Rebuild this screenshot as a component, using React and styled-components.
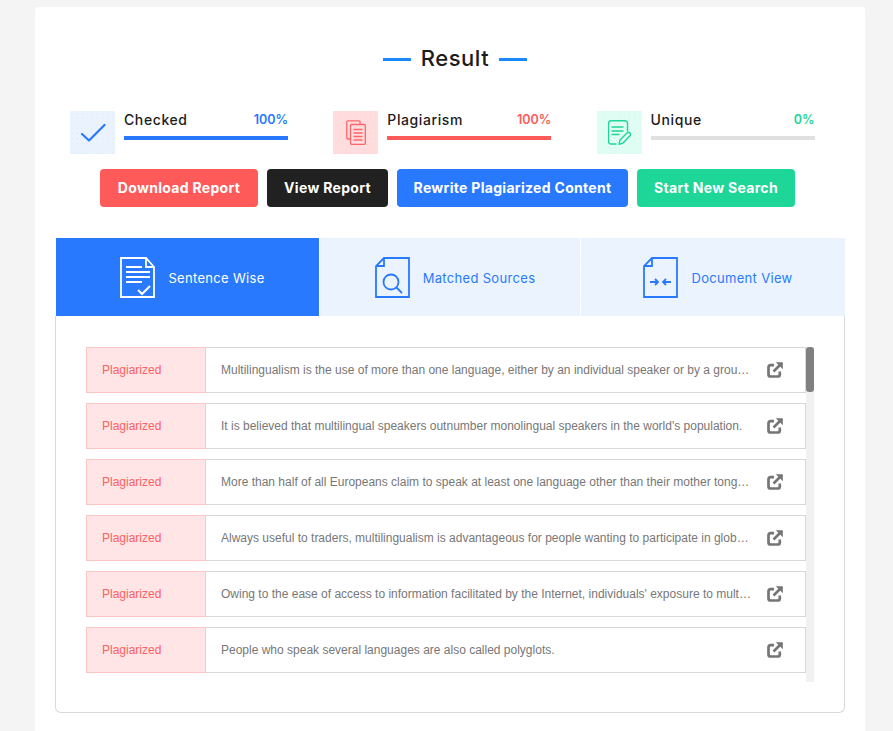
import React from "react";
import styled, { createGlobalStyle, css } from "styled-components";

const dots = (c) => css`
  background-image: radial-gradient(${c} 0.6px, transparent 0.8px);
  background-size: 5px 5px;
`;

const Global = createGlobalStyle`
  html, body { margin: 0; padding: 0; height: 100%; overflow: hidden; }
  body { background: #f4f4f4; font-family: "Inter", "Liberation Sans", sans-serif; }
  * { box-sizing: border-box; }
`;

const Card = styled.main`
  width: 830px;
  height: 724px;
  margin: 7px 0 0 35px;
  background: #fff;
  border-radius: 3px 3px 0 0;
  padding: 32px 20px 0 20px;
  display: flex;
  flex-direction: column;
`;

const Title = styled.h1`
  margin: 0 0 0 10px;
  height: 38px;
  display: flex;
  align-items: center;
  justify-content: center;
  gap: 10px;
  font-size: 22px;
  line-height: 38px;
  font-weight: 500;
  color: #1c1c1c;
  letter-spacing: 0.5px;
`;

const TitleRule = styled.span`
  width: 28px;
  height: 3px;
  background: #1a88ff;
  margin-top: 2px;
`;

const Stats = styled.section`
  display: grid;
  grid-template-columns: repeat(3, 218px);
  column-gap: 45.3px;
  margin: 34px 0 0 15px;
`;

const Stat = styled.div`
  display: flex;
  gap: 9px;
  height: 43px;
`;

const StatIcon = styled.div`
  width: 45px;
  height: 43px;
  display: flex;
  align-items: center;
  justify-content: center;
  background-color: ${(p) => p.$bg};
  ${(p) => dots(p.$dot)}
`;

const StatBody = styled.div`
  flex: 1;
  display: flex;
  flex-direction: column;
`;

const StatHead = styled.div`
  display: flex;
  justify-content: space-between;
  align-items: center;
  height: 17px;
  font-size: 14px;
  letter-spacing: 0.6px;
  font-weight: 500;
  color: #1c1c1c;
`;

const StatPct = styled.span`
  color: ${(p) => p.$c};
  font-size: 12.5px;
  letter-spacing: 0;
  font-weight: 600;
`;

const Bar = styled.div`
  height: 4px;
  margin-top: 8px;
  background: ${(p) => p.$c};
`;

const Actions = styled.div`
  display: flex;
  justify-content: center;
  gap: 9px;
  margin: 15px 5px 0 0;
`;

const Action = styled.button`
  height: 38px;
  width: ${(p) => p.$w}px;
  border: 0;
  padding: 0 0 2px;
  border-radius: 4px;
  background: ${(p) => p.$c};
  color: #fff;
  font-family: inherit;
  font-size: 14px;
  font-weight: 700;
  letter-spacing: 0.3px;
`;

const Tabs = styled.nav`
  display: flex;
  gap: 1px;
  margin: 31px 0 0 1px;
  width: 789px;
  height: 78px;
`;

const Tab = styled.div`
  flex: 0 0 ${(p) => p.$w}px;
  display: flex;
  align-items: center;
  justify-content: center;
  gap: 13px;
  padding-left: 10px;
  font-size: 13px;
  letter-spacing: 0.32px;
  background-color: ${(p) => (p.$active ? "#2979ff" : "#ebf4fe")};
  color: ${(p) => (p.$active ? "#fff" : "#2979ff")};
  ${(p) => dots(p.$active ? "#2e7dff" : "#e5f0fc")}
`;

const TabLabel = styled.span`
  margin-top: 2px;
`;

const Panel = styled.section`
  width: 790px;
  height: 397px;
  border: 1px solid #d9d9d9;
  border-top: 0;
  border-radius: 0 0 6px 6px;
  padding: 31px 30px 0 30px;
  display: flex;
  align-items: flex-start;
`;

const List = styled.ul`
  list-style: none;
  margin: 0;
  padding: 0;
  width: 720px;
  height: 335px;
  overflow: hidden;
  display: flex;
  flex-direction: column;
  gap: 10px;
`;

const Row = styled.li`
  flex: 0 0 46px;
  display: flex;
  border: 1px solid #d9d9d9;
  font-family: "Liberation Sans", Arial, sans-serif;
  font-size: 12px;
`;

const Status = styled.div`
  flex: 0 0 120px;
  margin: -1px 0 -1px -1px;
  padding-left: 15px;
  display: flex;
  align-items: center;
  background: #ffe5e5;
  border: 1px solid #ffc4c4;
  color: #ff5f64;
`;

const Sentence = styled.div`
  width: 531px;
  margin-left: 15px;
  align-self: center;
  color: #777;
  white-space: nowrap;
  overflow: hidden;
  text-overflow: ellipsis;
`;

const LinkIcon = styled.svg`
  margin: 14px 0 0 15px;
  width: 16px;
  height: 16px;
  flex: none;
`;

const Track = styled.div`
  width: 8px;
  height: 335px;
  background: #f1f1f1;
`;

const Thumb = styled.div`
  height: 45px;
  background: #808080;
  border-radius: 3px;
`;

const rows = [
  "Multilingualism is the use of more than one language, either by an individual speaker or by a group of speakers.",
  "It is believed that multilingual speakers outnumber monolingual speakers in the world's population.",
  "More than half of all Europeans claim to speak at least one language other than their mother tongue.",
  "Always useful to traders, multilingualism is advantageous for people wanting to participate in globalization.",
  "Owing to the ease of access to information facilitated by the Internet, individuals' exposure to multiple languages.",
  "People who speak several languages are also called polyglots.",
];

const Stack = () => (
  <svg width="20" height="25" viewBox="0 0 20 25" fill="none" stroke="#ff6468" strokeWidth="1.300">
    <path d="M14 4.500V1.800a1 1 0 0 0-1-1H1.800a1 1 0 0 0-1 1V18a1 1 0 0 0 1 1h2.700" />
    <rect x="4.500" y="4.500" width="14.800" height="19.800" rx="1" />
    <path d="M7.500 9.500h9M7.500 13h9M7.500 16.500h9M7.500 20h9" />
  </svg>
);

const Note = () => (
  <svg width="23" height="25" viewBox="0 0 23 25" fill="none" stroke="#1dd698" strokeWidth="1.400" strokeLinecap="round" strokeLinejoin="round">
    <path d="M8 24H3a2.500 2.500 0 0 1-2.500-2.500V3.200A2.500 2.500 0 0 1 3 .7h14a2.500 2.500 0 0 1 2.500 2.500V11" />
    <path d="M4 7h11M4 11h11M4 14.500h7" />
    <path d="M11 24.300l1-4.300 7-7a1.800 1.800 0 0 1 3 2.800l-7 7.200z" />
  </svg>
);

const Check = () => (
  <svg width="26" height="20" viewBox="0 0 26 20" fill="none" stroke="#2979ff" strokeWidth="2.200" strokeLinecap="round" strokeLinejoin="round">
    <path d="M2 11l7 6.500L24.500 2" />
  </svg>
);

const DocCheck = () => (
  <svg width="35" height="41" viewBox="0 0 35 41" fill="none" stroke="#fff" strokeWidth="1.800">
    <path d="M1 1h25l8 9v30H1z" />
    <path d="M26 1v9h8" />
    <path d="M6 10h16M6 15h24M6 20h24M6 25h16" />
    <path d="M18 33l4 4 8-8" strokeWidth="2" />
  </svg>
);

const DocSearch = () => (
  <svg width="35" height="41" viewBox="0 0 35 41" fill="none" stroke="#2979ff" strokeWidth="1.800">
    <path d="M9 1h25v39H1V9z" />
    <path d="M9 1v8H1" />
    <circle cx="16" cy="25" r="7.500" />
    <path d="M21.500 30.500L27 36" />
  </svg>
);

const DocMerge = () => (
  <svg width="35" height="41" viewBox="0 0 35 41" fill="none" stroke="#2979ff" strokeWidth="1.800">
    <path d="M9 1h25v39H1V9z" />
    <path d="M9 1v8H1" />
    <path d="M7 25h8M12 22l3 3-3 3M28 25h-8M23 22l-3 3 3 3" />
  </svg>
);

const External = () => (
  <LinkIcon viewBox="0 0 16 16" fill="none" stroke="#757575" strokeWidth="2.700">
    <path d="M7 3.200H3.500A2 2 0 0 0 1.500 5.200v7.300a2 2 0 0 0 2 2h7.300a2 2 0 0 0 2-2V9.500" />
    <path d="M6.500 9.500L13 3" />
    <path d="M8.800 0.300h7v7z" fill="#757575" stroke="none" />
  </LinkIcon>
);

export default function App() {
  return (
    <>
      <Global />
      <Card>
        <Title>
          <TitleRule />
          Result
          <TitleRule />
        </Title>
        <Stats>
          <Stat>
            <StatIcon $bg="#eaf3fd" $dot="#dfeafa"><Check /></StatIcon>
            <StatBody>
              <StatHead>Checked<StatPct $c="#2979ff">100%</StatPct></StatHead>
              <Bar $c="#2979ff" />
            </StatBody>
          </Stat>
          <Stat>
            <StatIcon $bg="#ffdddf" $dot="#ffd3d5"><Stack /></StatIcon>
            <StatBody>
              <StatHead>Plagiarism<StatPct $c="#ff5a5a">100%</StatPct></StatHead>
              <Bar $c="#ff5a5a" />
            </StatBody>
          </Stat>
          <Stat>
            <StatIcon $bg="#e0fdf3" $dot="#d6f9ec"><Note /></StatIcon>
            <StatBody>
              <StatHead>Unique<StatPct $c="#1dd698">0%</StatPct></StatHead>
              <Bar $c="#e0e0e0" />
            </StatBody>
          </Stat>
        </Stats>
        <Actions>
          <Action $w={158} $c="#ff5a5a">Download Report</Action>
          <Action $w={121} $c="#212121">View Report</Action>
          <Action $w={231} $c="#2979ff">Rewrite Plagiarized Content</Action>
          <Action $w={158} $c="#1dd698">Start New Search</Action>
        </Actions>
        <Tabs>
          <Tab $w={263} $active><DocCheck /><TabLabel>Sentence Wise</TabLabel></Tab>
          <Tab $w={260}><DocSearch /><TabLabel>Matched Sources</TabLabel></Tab>
          <Tab $w={264}><DocMerge /><TabLabel>Document View</TabLabel></Tab>
        </Tabs>
        <Panel>
          <List>
            {rows.map((t) => (
              <Row key={t}>
                <Status>Plagiarized</Status>
                <Sentence>{t}</Sentence>
                <External />
              </Row>
            ))}
          </List>
          <Track><Thumb /></Track>
        </Panel>
      </Card>
    </>
  );
}
